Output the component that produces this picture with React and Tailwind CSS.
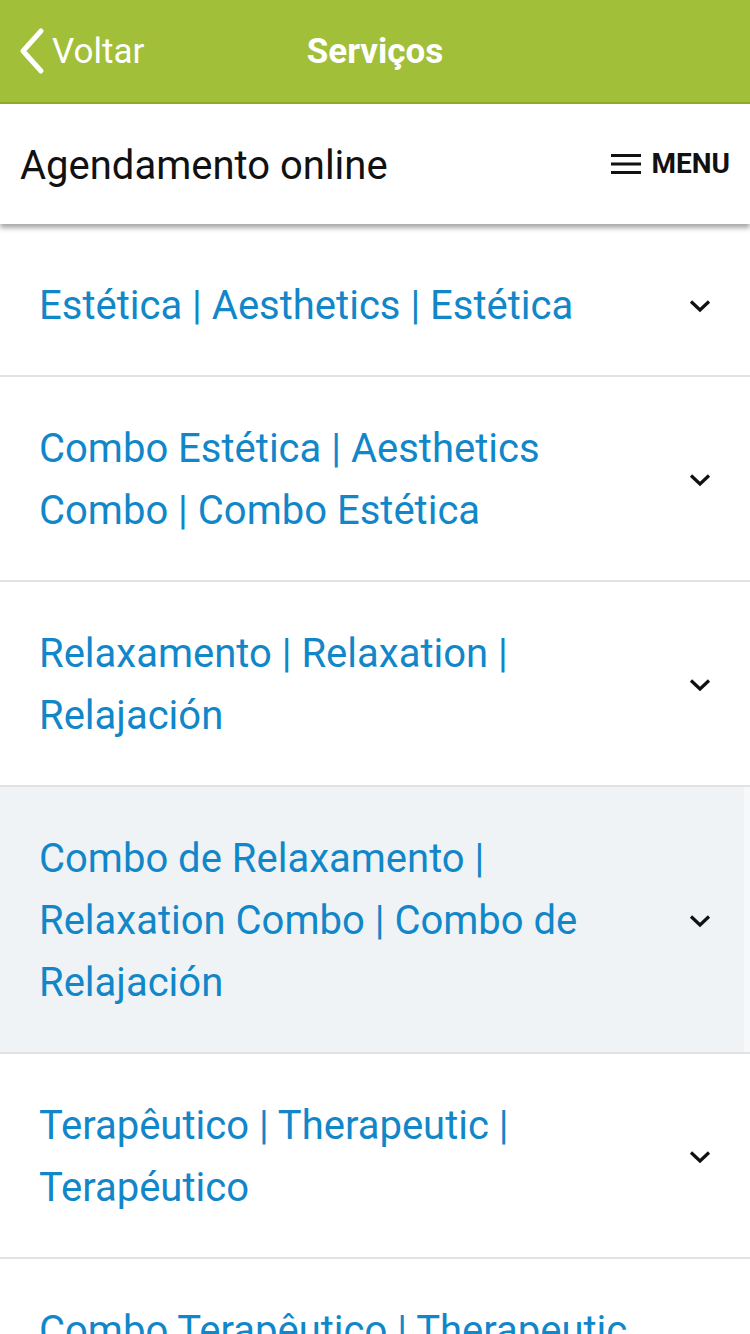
const categories = [
	{ id: 1, name: "Estética | Aesthetics | Estética" },
	{ id: 2, name: "Combo Estética | Aesthetics Combo | Combo Estética" },
	{ id: 3, name: "Relaxamento | Relaxation | Relajación" },
	{ id: 4, name: "Combo de Relaxamento | Relaxation Combo | Combo de Relajación", active: true },
	{ id: 5, name: "Terapêutico | Therapeutic | Terapéutico" },
	{ id: 6, name: "Combo Terapêutico | Therapeutic Combo | Combo Terapéutico" },
];

const ChevronDown = () => (
	<svg width="22" height="14" viewBox="0 0 22 14" fill="none">
		<path d="M2 2.5l9 8.5 9-8.5" stroke="#111" strokeWidth="3.2" />
	</svg>
);

const App = () => {
	return (
		<div className="w-[750px] h-[1334px] overflow-hidden bg-white" style={{ fontFamily: "Roboto, 'Noto Sans', sans-serif" }}>
			<div className="h-[104px] bg-[#a1bf38] border-b-2 border-[#8fab2c] relative flex items-center">
				<div className="flex items-center pl-[18px] text-white">
					<svg width="28" height="48" viewBox="0 0 28 48" fill="none">
						<path d="M23 4L5 24l18 20" stroke="white" strokeWidth="5" strokeLinecap="round" strokeLinejoin="round" />
					</svg>
					<span className="ml-[6px] text-[35px] leading-none">Voltar</span>
				</div>
				<div className="absolute left-0 right-0 text-center text-white text-[35px] font-bold leading-none pointer-events-none">
					Serviços
				</div>
			</div>

			<div className="h-[120px] flex items-center justify-between pl-[20px] pr-[20px] bg-white shadow-[0_4px_5px_rgba(0,0,0,0.35)] relative z-10">
				<h1 className="text-[40px] text-[#111] mt-[3px]">Agendamento online</h1>
				<div className="flex items-center gap-[11px]">
					<svg width="30" height="22" viewBox="0 0 30 22">
						<rect x="0" y="1" width="30" height="3" fill="#111" />
						<rect x="0" y="9.5" width="30" height="3" fill="#111" />
						<rect x="0" y="18" width="30" height="3" fill="#111" />
					</svg>
					<span className="text-[28px] font-bold text-[#111]">MENU</span>
				</div>
			</div>

			<div className="mt-[10px]">
				{categories.map((category) => (
					<div
						key={category.id}
						className={`flex items-center justify-between pl-[39px] pr-[39px] pt-[41px] pb-[38px] border-b-2 border-[#e2e2e2] ${
							category.active ? "bg-[#eff3f6] shadow-[inset_-6px_0_0_#f6f8fa]" : "bg-white"
						}`}
					>
						<p className="text-[40px] leading-[62px] text-[#1187c9] max-w-[600px]">{category.name}</p>
						<ChevronDown />
					</div>
				))}
			</div>
		</div>
	);
};

export default App;
